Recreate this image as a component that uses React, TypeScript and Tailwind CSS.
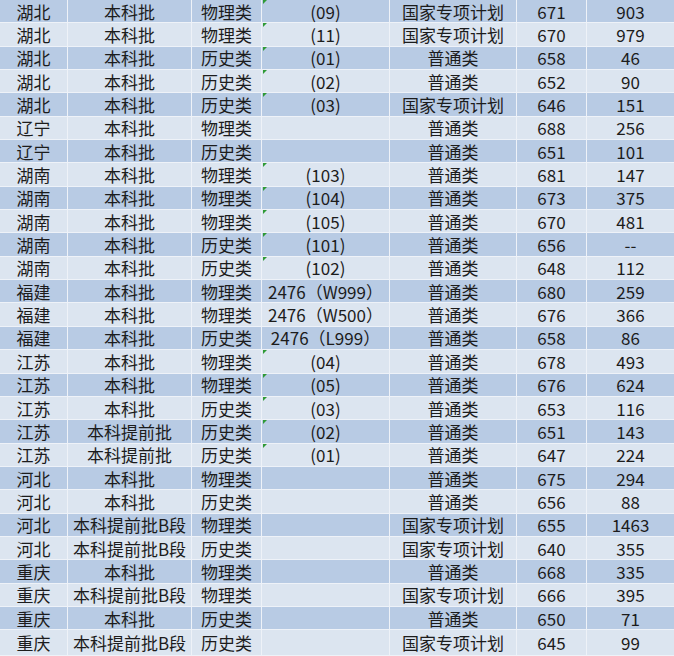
import React from 'react';

type Row = {
  province: string;
  batch: string;
  subject: string;
  code: string;
  flag: boolean;
  kind: string;
  score: string;
  rank: string;
};

const GJ = '国家专项计划';
const PT = '普通类';

const rows: Row[] = [
  { province: '湖北', batch: '本科批', subject: '物理类', code: '(09)', flag: true, kind: GJ, score: '671', rank: '903' },
  { province: '湖北', batch: '本科批', subject: '物理类', code: '(11)', flag: true, kind: GJ, score: '670', rank: '979' },
  { province: '湖北', batch: '本科批', subject: '历史类', code: '(01)', flag: true, kind: PT, score: '658', rank: '46' },
  { province: '湖北', batch: '本科批', subject: '历史类', code: '(02)', flag: true, kind: PT, score: '652', rank: '90' },
  { province: '湖北', batch: '本科批', subject: '历史类', code: '(03)', flag: true, kind: GJ, score: '646', rank: '151' },
  { province: '辽宁', batch: '本科批', subject: '物理类', code: '', flag: false, kind: PT, score: '688', rank: '256' },
  { province: '辽宁', batch: '本科批', subject: '历史类', code: '', flag: false, kind: PT, score: '651', rank: '101' },
  { province: '湖南', batch: '本科批', subject: '物理类', code: '(103)', flag: true, kind: PT, score: '681', rank: '147' },
  { province: '湖南', batch: '本科批', subject: '物理类', code: '(104)', flag: true, kind: PT, score: '673', rank: '375' },
  { province: '湖南', batch: '本科批', subject: '物理类', code: '(105)', flag: true, kind: PT, score: '670', rank: '481' },
  { province: '湖南', batch: '本科批', subject: '历史类', code: '(101)', flag: true, kind: PT, score: '656', rank: '--' },
  { province: '湖南', batch: '本科批', subject: '历史类', code: '(102)', flag: true, kind: PT, score: '648', rank: '112' },
  { province: '福建', batch: '本科批', subject: '物理类', code: '2476（W999）', flag: false, kind: PT, score: '680', rank: '259' },
  { province: '福建', batch: '本科批', subject: '物理类', code: '2476（W500）', flag: false, kind: PT, score: '676', rank: '366' },
  { province: '福建', batch: '本科批', subject: '历史类', code: '2476（L999）', flag: false, kind: PT, score: '658', rank: '86' },
  { province: '江苏', batch: '本科批', subject: '物理类', code: '(04)', flag: true, kind: PT, score: '678', rank: '493' },
  { province: '江苏', batch: '本科批', subject: '物理类', code: '(05)', flag: true, kind: PT, score: '676', rank: '624' },
  { province: '江苏', batch: '本科批', subject: '历史类', code: '(03)', flag: true, kind: PT, score: '653', rank: '116' },
  { province: '江苏', batch: '本科提前批', subject: '历史类', code: '(02)', flag: true, kind: PT, score: '651', rank: '143' },
  { province: '江苏', batch: '本科提前批', subject: '历史类', code: '(01)', flag: true, kind: PT, score: '647', rank: '224' },
  { province: '河北', batch: '本科批', subject: '物理类', code: '', flag: false, kind: PT, score: '675', rank: '294' },
  { province: '河北', batch: '本科批', subject: '历史类', code: '', flag: false, kind: PT, score: '656', rank: '88' },
  { province: '河北', batch: '本科提前批B段', subject: '物理类', code: '', flag: false, kind: GJ, score: '655', rank: '1463' },
  { province: '河北', batch: '本科提前批B段', subject: '历史类', code: '', flag: false, kind: GJ, score: '640', rank: '355' },
  { province: '重庆', batch: '本科批', subject: '物理类', code: '', flag: false, kind: PT, score: '668', rank: '335' },
  { province: '重庆', batch: '本科提前批B段', subject: '物理类', code: '', flag: false, kind: GJ, score: '666', rank: '395' },
  { province: '重庆', batch: '本科批', subject: '历史类', code: '', flag: false, kind: PT, score: '650', rank: '71' },
  { province: '重庆', batch: '本科提前批B段', subject: '历史类', code: '', flag: false, kind: GJ, score: '645', rank: '99' },
];

const cell = 'flex items-center justify-center whitespace-nowrap border-r border-b border-[#eef2f8]';

const App: React.FC = () => {
  return (
    <div
      className="w-[674px] h-[656px] overflow-hidden flex flex-col text-[17px] leading-none text-[#1c1c1c]"
      style={{ fontFamily: '"Microsoft YaHei", "Noto Sans CJK SC", sans-serif' }}
    >
      {rows.map((r, i) => (
        <div
          key={i}
          className={`grid grid-cols-[68px_124px_70px_128px_127px_70px_87px] shrink-0 ${
            i === rows.length - 1 ? 'flex-1' : 'h-[23.35px]'
          } ${i % 2 === 0 ? 'bg-[#b8cbe4]' : 'bg-[#dce5f0]'}`}
        >
          <div className={cell}>{r.province}</div>
          <div className={cell}>{r.batch}</div>
          <div className={cell}>{r.subject}</div>
          <div className={`${cell} relative`}>
            {r.flag && (
              <span className="absolute top-0 left-[1px] w-0 h-0 border-t-[4px] border-r-[4px] border-t-[#2f9a36] border-r-transparent" />
            )}
            {r.code}
          </div>
          <div className={cell}>{r.kind}</div>
          <div className={cell}>{r.score}</div>
          <div className={`${cell} border-r-0`}>{r.rank}</div>
        </div>
      ))}
    </div>
  );
};

export default App;
